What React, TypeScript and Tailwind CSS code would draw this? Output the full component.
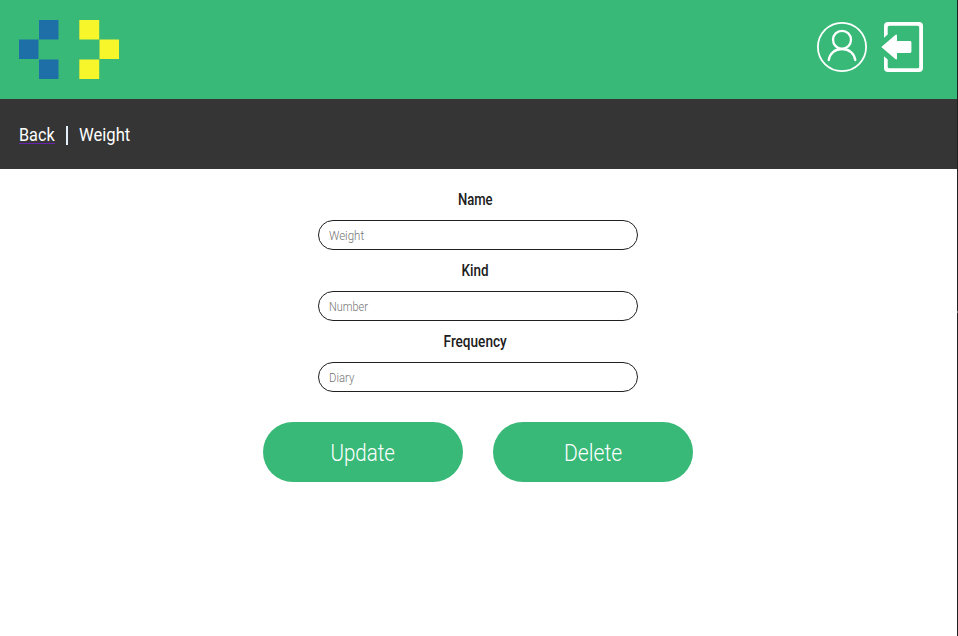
import React from "react";

type LabelProps = { children: string; className?: string };

function Condensed({ children, className = "" }: LabelProps) {
  return <span className={`inline-block whitespace-nowrap ${className}`}>{children}</span>;
}

function Logo() {
  return (
    <svg width="100" height="59" viewBox="0 0 100 59" aria-label="Logo">
      <g fill="#1e6fa8">
        <rect x="20" y="0" width="19.5" height="19.5" />
        <rect x="0" y="19.5" width="19.5" height="19.5" />
        <rect x="20" y="39.5" width="19.5" height="19.5" />
      </g>
      <g fill="#f6f62a">
        <rect x="60.3" y="0" width="19.9" height="19.5" />
        <rect x="80.5" y="19.5" width="19.5" height="19.5" />
        <rect x="60.3" y="39.5" width="19.9" height="19.5" />
      </g>
    </svg>
  );
}

function UserIcon() {
  return (
    <svg width="50" height="50" viewBox="0 0 50 50" fill="none" stroke="white">
      <circle cx="25" cy="25" r="24.1" strokeWidth="1.8" />
      <circle cx="25" cy="17.8" r="9" strokeWidth="2.3" />
      <path d="M11.7 38C12.5 31.5 18 27 25 27S37.5 31.5 38.3 38" strokeWidth="2.3" strokeLinecap="round" />
    </svg>
  );
}

function ExitIcon() {
  return (
    <svg width="42" height="50" viewBox="0 0 42 50" fill="white">
      <path d="M3 15.8V4Q3 0 7 0H38Q42 0 42 4V46Q42 50 38 50H7Q3 50 3 46V34.2L6.7 37.6V44.8Q6.7 46.3 8.2 46.3H36.6Q38.2 46.3 38.2 44.8V5.2Q38.2 3.7 36.6 3.7H8.2Q6.7 3.7 6.7 5.2V12.4Z" />
      <path d="M.3 25 14.3 12.9Q16 11.7 16 13.7V19H29Q30.4 19 30.4 20.4V29.6Q30.4 31 29 31H16V36.3Q16 38.3 14.3 37.1Z" />
    </svg>
  );
}

type FieldProps = { label: string; value: string; labelClass: string; valueClass: string };

function Field({ label, value, labelClass, valueClass }: FieldProps) {
  return (
    <div className="flex h-[71px] w-80 flex-col items-center">
      <div className="flex h-[41px] w-full items-center justify-center pr-[5px] pt-px text-base font-medium text-[#202020]">
        <Condensed className={labelClass}>{label}</Condensed>
      </div>
      <div className="flex h-[30px] w-full items-center rounded-full border border-[#202020] pl-2.5 pt-px text-[13.33px] font-light text-[#757575]">
        <Condensed className={`origin-left ${valueClass}`}>{value}</Condensed>
      </div>
    </div>
  );
}

export default function App() {
  return (
    <div className="flex h-[636px] w-[958px] overflow-hidden bg-white font-['Roboto',sans-serif]">
      <div className="w-[957px]">
        <header className="flex h-[99px] items-center justify-between bg-[#38b978] pl-[19px] pr-[34px]">
          <Logo />
          <div className="flex gap-3.5 pb-[5px]">
            <UserIcon />
            <ExitIcon />
          </div>
        </header>
        <nav className="flex h-[70px] items-center bg-[#353535] pl-[19px] pt-0.5 text-[19.2px] text-white">
          <a className="flex w-9 border-b border-[#6a22b0] leading-4">
            <Condensed className="origin-left scale-x-[0.845]">Back</Condensed>
          </a>
          <span className="ml-[11px] h-[19px] w-[1.5px] bg-[#e2f2fa]" />
          <Condensed className="ml-[11.5px] origin-left scale-x-[0.865]">Weight</Condensed>
        </nav>
        <main className="flex flex-col items-center pr-px pt-2.5">
          <Field label="Name" value="Weight" labelClass="scale-x-[0.815]" valueClass="scale-x-[0.865]" />
          <Field label="Kind" value="Number" labelClass="scale-x-[0.84]" valueClass="scale-x-[0.82]" />
          <Field label="Frequency" value="Diary" labelClass="scale-x-[0.85]" valueClass="scale-x-[0.85]" />
          <div className="mt-[30px] flex gap-[30px] text-2xl font-light text-white">
            <button className="h-[60px] w-[200px] rounded-full bg-[#38b978] pt-0.5">
              <Condensed className="scale-x-[0.855]">Update</Condensed>
            </button>
            <button className="h-[60px] w-[200px] rounded-full bg-[#38b978] pt-0.5">
              <Condensed className="scale-x-[0.88]">Delete</Condensed>
            </button>
          </div>
        </main>
      </div>
      <div className="flex w-px flex-col bg-[#202020] pt-[311px]">
        <span className="h-0.5 w-px bg-[#777777]" />
      </div>
    </div>
  );
}
